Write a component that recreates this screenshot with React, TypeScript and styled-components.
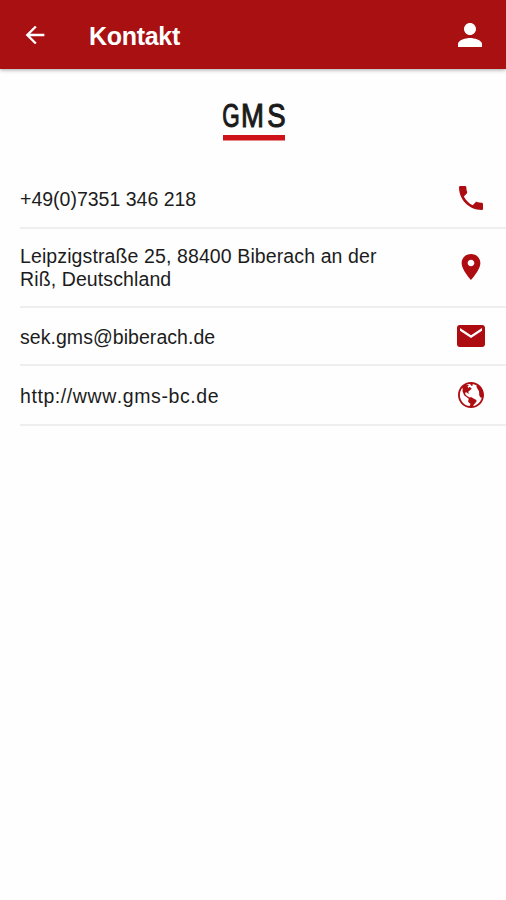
import React from "react";
import styled, { createGlobalStyle } from "styled-components";
import { IoMdArrowBack, IoMdPerson, IoMdCall, IoMdPin, IoMdMail, IoMdGlobe } from "react-icons/io";

const GlobalStyle = createGlobalStyle`
  * { box-sizing: border-box; }
  body {
    margin: 0;
    background: #fff;
    font-family: "Liberation Sans", Arial, sans-serif;
    overflow: hidden;
  }
`;

const Screen = styled.div`
  display: flex;
  flex-direction: column;
  height: 900px;
  background: #fefefe;
`;

const Header = styled.header`
  display: flex;
  align-items: center;
  height: 69px;
  padding: 1px 20px 0 19px;
  background: #a81012;
  color: #fff;
  box-shadow: 0 1px 4px rgba(0, 0, 0, 0.35);
`;

const BarButton = styled.button<{ $size: number }>`
  display: flex;
  justify-content: center;
  width: 32px;
  padding: 0;
  border: 0;
  background: none;
  color: inherit;
  font-size: ${(p) => p.$size}px;
`;

const Title = styled.h1`
  flex: 1;
  margin: 1px 0 0 38px;
  font-size: 25px;
  line-height: 30px;
  font-weight: 700;
  letter-spacing: -0.3px;
`;

const LogoArea = styled.div`
  display: flex;
  justify-content: center;
  height: 101px;
  padding: 19px 0 0 2px;
`;

const List = styled.ul`
  margin: 0;
  padding: 0 0 0 20px;
  list-style: none;
`;

const Row = styled.li<{ $height: number }>`
  display: flex;
  align-items: center;
  justify-content: space-between;
  height: ${(p) => p.$height}px;
  padding-right: 16px;
  border-bottom: 2px solid #eeeeee;
`;

const Label = styled.span<{ $spacing: number; $top: number }>`
  width: 370px;
  padding-top: ${(p) => p.$top}px;
  font-size: 19.5px;
  line-height: 23px;
  font-kerning: none;
  letter-spacing: ${(p) => p.$spacing}px;
  color: #1c1c1c;
`;

const RowIcon = styled.span<{ $size: number; $lift?: number }>`
  display: flex;
  justify-content: center;
  width: 38px;
  padding-bottom: ${(p) => p.$lift ?? 0}px;
  color: #ad0c10;
  font-size: ${(p) => p.$size}px;
`;

const contacts = [
  { text: "+49(0)7351 346 218", icon: <IoMdCall />, size: 32, height: 59, spacing: 0, top: 2, lift: 1 },
  { text: "Leipzigstraße 25, 88400 Biberach an der Riß, Deutschland", icon: <IoMdPin />, size: 30, height: 79, spacing: 0.11, top: 0, lift: 2 },
  { text: "sek.gms@biberach.de", icon: <IoMdMail />, size: 32, height: 58, spacing: 0.05, top: 2 },
  { text: "http://www.gms-bc.de", icon: <IoMdGlobe />, size: 32, height: 60, spacing: 0.58, top: 2 },
];

const LogoLetter = styled.text`
  font-family: "Liberation Sans", Arial, sans-serif;
  font-size: 34px;
  fill: #1b1b1b;
  stroke: #1b1b1b;
  stroke-width: 1.1px;
`;

const Logo = () => (
  <svg width="74" height="54" viewBox="-4 -10 74 54" role="img" aria-label="GMS">
    <LogoLetter transform="translate(1.2 29) scale(0.66 1)">G</LogoLetter>
    <LogoLetter transform="translate(20 29) scale(0.81 1)">M</LogoLetter>
    <LogoLetter transform="translate(46.3 29) scale(0.81 1)">S</LogoLetter>
    <rect x="2" y="37" width="62" height="5.5" fill="#cf1419" />
  </svg>
);

export default function App() {
  return (
    <Screen>
      <GlobalStyle />
      <Header>
        <BarButton $size={28} aria-label="Zurück"><IoMdArrowBack /></BarButton>
        <Title>Kontakt</Title>
        <BarButton $size={32} aria-label="Profil"><IoMdPerson /></BarButton>
      </Header>
      <LogoArea><Logo /></LogoArea>
      <List>
        {contacts.map((c) => (
          <Row key={c.text} $height={c.height}>
            <Label $spacing={c.spacing} $top={c.top}>{c.text}</Label>
            <RowIcon $size={c.size} $lift={c.lift}>{c.icon}</RowIcon>
          </Row>
        ))}
      </List>
    </Screen>
  );
}
